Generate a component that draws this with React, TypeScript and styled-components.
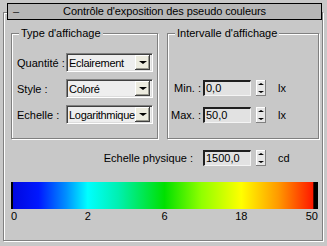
import React from "react";
import styled, { createGlobalStyle } from "styled-components";

const GlobalStyle = createGlobalStyle`
  html, body {
    margin: 0;
    padding: 0;
    background: #c8c8c8;
  }
  body {
    font-family: "Liberation Sans", Arial, sans-serif;
    font-size: 11px;
    color: #000;
  }
  * {
    box-sizing: border-box;
  }
`;

const Page = styled.div`
  width: 327px;
  height: 246px;
  padding: 12px 4px 0 3px;
  overflow: hidden;
`;

const Rollout = styled.div`
  height: 229px;
  border: 1px solid #808080;
  box-shadow: 1px 1px 0 #fff, inset 1px 1px 0 #fff;
`;

const TitleBar = styled.div`
  margin: -10px 0 0 3px;
  height: 17px;
  border: 1px solid #000;
  background: #b7b7b7;
  display: flex;
  align-items: center;
  line-height: 13px;
  letter-spacing: -0.1px;
`;

const Collapse = styled.span`
  width: 20px;
  padding-left: 5px;
  color: #222;
`;

const TitleText = styled.span`
  flex: 1;
  text-align: center;
`;

const Body = styled.div`
  padding: 7px 3px 0 7px;
`;

const Groups = styled.div`
  display: flex;
  gap: 9px;
`;

const Group = styled.fieldset<{ $width: number }>`
  width: ${(p) => p.$width}px;
  height: 112px;
  margin: 0;
  padding: 0;
  border: 1px solid #808080;
  box-shadow: 1px 1px 0 #fff, inset 1px 1px 0 #fff;
  min-width: 0;
`;

const Legend = styled.legend`
  margin-left: 7px;
  padding: 0 2px;
  line-height: 13px;
  background: #c8c8c8;
`;

const Rows = styled.div<{ $top: number; $gap: number }>`
  display: flex;
  flex-direction: column;
  gap: ${(p) => p.$gap}px;
  padding-top: ${(p) => p.$top}px;
`;

const Row = styled.div`
  display: flex;
  align-items: center;
`;

const ComboLabel = styled.span`
  width: 54px;
  padding-left: 5px;
  white-space: nowrap;
`;

const Combo = styled.div`
  width: 87px;
  height: 19px;
  display: flex;
  align-items: center;
  background: #eeeeee;
  border-top: 1px solid #808080;
  border-left: 1px solid #808080;
  border-bottom: 1px solid #fff;
  border-right: 1px solid #fff;
  box-shadow: inset 1px 1px 0 #404040, inset -1px -1px 0 #dcdcdc;
  padding: 2px 2px 2px 2px;
`;

const ComboText = styled.span`
  flex: 1;
  min-width: 0;
  overflow: hidden;
  white-space: nowrap;
  letter-spacing: -0.3px;
`;

const ComboButton = styled.div`
  width: 15px;
  height: 15px;
  flex: none;
  display: flex;
  align-items: center;
  justify-content: center;
  background: #ecebdf;
  box-shadow: inset -1px -1px 0 #404040, inset 1px 1px 0 #fff,
    inset -2px -2px 0 #9a9a90;
`;

const Arrow = styled.span<{ $up?: boolean; $size: number }>`
  width: 0;
  height: 0;
  border-left: ${(p) => p.$size}px solid transparent;
  border-right: ${(p) => p.$size}px solid transparent;
  ${(p) =>
    p.$up
      ? `border-bottom: ${p.$size - 1}px solid #000;`
      : `border-top: ${p.$size - 1}px solid #000;`}
`;

const SpinLabel = styled.span<{ $width: number }>`
  width: ${(p) => p.$width}px;
  text-align: right;
  white-space: nowrap;
  margin-right: 2px;
`;

const Field = styled.div`
  width: 48px;
  height: 16px;
  background: #e2e2e2;
  border-top: 2px solid #202020;
  border-left: 2px solid #202020;
  border-bottom: 1px solid #f4f4f4;
  border-right: 1px solid #f4f4f4;
  padding-left: 1px;
  line-height: 12px;
`;

const Spinner = styled.div`
  width: 10px;
  height: 16px;
  margin-left: 5px;
  display: flex;
  flex-direction: column;
  background: #e6e6e6;
  box-shadow: inset -1px -1px 0 #808080, inset 1px 1px 0 #fff;
`;

const SpinHalf = styled.div`
  flex: 1;
  display: flex;
  align-items: center;
  justify-content: center;
`;

const Unit = styled.span`
  margin-left: 12px;
`;

const PhysRow = styled(Row)`
  margin-top: 11px;
`;

const PhysLabel = styled.span`
  width: 182px;
  text-align: right;
  margin-right: 10px;
  white-space: nowrap;
`;

const ColorBar = styled.div`
  margin-top: 16px;
  width: 307px;
  height: 27px;
  background: linear-gradient(
    to right,
    #000 0%,
    #000 0.7%,
    #0008e0 0.8%,
    #0018ff 9%,
    #0090ff 18%,
    #00ffff 25%,
    #00f0b0 35%,
    #00e000 50%,
    #90ff00 62%,
    #ffff00 75%,
    #ff9a00 87%,
    #ff1800 98.4%,
    #000 98.6%,
    #000 100%
  );
`;

const Scale = styled.div`
  width: 307px;
  display: flex;
  justify-content: space-between;
  line-height: 13px;
  margin-top: 1px;
`;

const Tick = styled.div<{ $align: string }>`
  width: 0;
  display: flex;
  justify-content: ${(p) => p.$align};
  white-space: nowrap;
`;

const ComboBox = ({ label, value }: { label: string; value: string }) => (
  <Row>
    <ComboLabel>{label}</ComboLabel>
    <Combo>
      <ComboText>{value}</ComboText>
      <ComboButton>
        <Arrow $size={4} />
      </ComboButton>
    </Combo>
  </Row>
);

const Spin = () => (
  <Spinner>
    <SpinHalf>
      <Arrow $up $size={3} />
    </SpinHalf>
    <SpinHalf>
      <Arrow $size={3} />
    </SpinHalf>
  </Spinner>
);

const SpinRow = ({ label, value, unit }: { label: string; value: string; unit: string }) => (
  <Row>
    <SpinLabel $width={33}>{label}</SpinLabel>
    <Field>{value}</Field>
    <Spin />
    <Unit>{unit}</Unit>
  </Row>
);

const ticks = ["0", "2", "6", "18", "50"];

export default function App() {
  return (
    <Page>
      <GlobalStyle />
      <Rollout>
        <TitleBar>
          <Collapse>–</Collapse>
          <TitleText>Contrôle d'exposition des pseudo couleurs</TitleText>
          <Collapse />
        </TitleBar>
        <Body>
          <Groups>
            <Group $width={147}>
              <Legend>Type d'affichage</Legend>
              <Rows $top={13} $gap={7}>
                <ComboBox label="Quantité :" value="Eclairement" />
                <ComboBox label="Style :" value="Coloré" />
                <ComboBox label="Echelle :" value="Logarithmique" />
              </Rows>
            </Group>
            <Group $width={152}>
              <Legend>Intervalle d'affichage</Legend>
              <Rows $top={40} $gap={11}>
                <SpinRow label="Min. :" value="0,0" unit="lx" />
                <SpinRow label="Max. :" value="50,0" unit="lx" />
              </Rows>
            </Group>
          </Groups>
          <PhysRow>
            <PhysLabel>Echelle physique :</PhysLabel>
            <Field>1500,0</Field>
            <Spin />
            <Unit>cd</Unit>
          </PhysRow>
          <ColorBar />
          <Scale>
            {ticks.map((t, i) => (
              <Tick
                key={t}
                $align={i === 0 ? "flex-start" : i === ticks.length - 1 ? "flex-end" : "center"}
              >
                {t}
              </Tick>
            ))}
          </Scale>
        </Body>
      </Rollout>
    </Page>
  );
}
